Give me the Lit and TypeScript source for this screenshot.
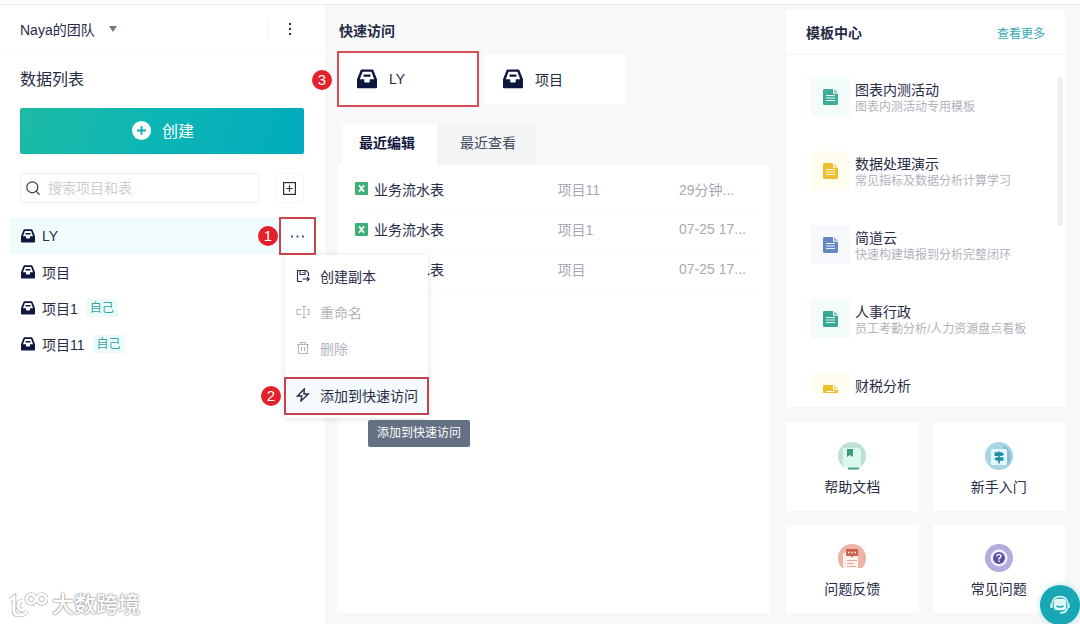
import { LitElement, html, css, svg, nothing } from "lit";
import { customElement, property, state } from "lit/decorators.js";
import { classMap } from "lit/directives/class-map.js";

const base = css`
  * { box-sizing: border-box; }
  button { font: inherit; color: inherit; border: 0; background: none; padding: 0; cursor: pointer; text-align: left; }
  a { color: inherit; text-decoration: none; }
  h2, p, ul { margin: 0; padding: 0; }
  ul { list-style: none; }
  svg { display: block; flex: none; }
`;

const tray = (size: number) => html`<svg width=${size} height=${size} viewBox="0 0 20 20" aria-hidden="true">
  <path fill="#10173f" fill-rule="evenodd" d="M4.800 0.500h10.400a1.400 1.400 0 0 1 1.300 1L20 10.200v7.700a1.300 1.300 0 0 1-1.300 1.300H1.300A1.300 1.300 0 0 1 0 17.900V10.200L3.500 1.500A1.400 1.400 0 0 1 4.800.5ZM5.600 2.800 2.800 10.300h4.400v2.200q0 1 1 1h3.600q1 0 1-1v-2.200h4.400L14.400 2.800ZM6.500 5.600h7v2.200h-7Z"/>
</svg>`;

const doc = (color: string) => html`<svg width="15" height="16" viewBox="0 0 15 16" aria-hidden="true">
  <path fill=${color} d="M1.200 0H10v4.800h5v10a1.200 1.200 0 0 1-1.200 1.200H1.200A1.200 1.200 0 0 1 0 14.800V1.200A1.200 1.200 0 0 1 1.200 0Z"/>
  <path fill=${color} opacity=".75" d="M11.200.3 14.700 3.700h-3.500Z"/>
  <path stroke="#fff" stroke-width="1.100" opacity=".85" d="M3 6.500h9M3 9h9M3 11.500h9"/>
</svg>`;

const sheet = html`<svg width="13" height="13" viewBox="0 0 13 13" aria-hidden="true">
  <rect width="13" height="13" rx="1" fill="#3fae78"/>
  <path d="M4 3.200 9 9.800M9 3.200 4 9.800" stroke="#fff" stroke-width="1.800"/>
</svg>`;

const menuIcons: Record<string, unknown> = {
  copy: svg`<path d="M6 12.500H1.500v-11h8.800L12.500 4v3M4 1.500v4h5v-4M7 3v1M6.500 10H13M11 8l2.200 2L11 12.200"/>`,
  rename: svg`<path d="M5.500 4.500H1v5h4.500M10.500 4.500H13v5h-2.500M6 1.500h1.200q.8 0 .8.800v9.400q0 .8-.8.800H6M10 1.500H8.800q-.8 0-.8.800M10 12.500H8.800q-.8 0-.8-.8"/>`,
  remove: svg`<path d="M1 3.500h12M4.500 3.200V1.500h5v1.700M2.500 3.500v9h9v-9M5.500 6v4M8.500 6v4"/>`,
  flash: svg`<path stroke-width="1.400" d="M8.300 1 1.500 8h4.300L5 13l7.300-7H8Z"/>`,
};

const helpIcons: Record<string, unknown> = {
  book: svg`<circle cx="14" cy="14" r="14" fill="#bfe0d5"/>
    <path d="M5 6h14q4 0 4 4v15H9q-4 0-4-4Z" fill="#dcf8ee"/>
    <path d="M5 21q0 4 4 4h14l-2 2.500H9Q4 26 5 21Z" fill="#eefcf8"/>
    <path d="M10 25.500h12l-2 2H10Z" fill="#44a68a"/>
    <path d="M9 7h6v8l-3-2-3 2Z" fill="#399880"/>`,
  sign: svg`<circle cx="14" cy="14" r="14" fill="#a9d6e6"/>
    <path d="M18 3a13 13 0 0 1 5 20l-4-3Z" fill="#86bfd3"/>
    <rect x="6" y="7" width="16" height="16" rx="1.500" fill="#e2f8fc"/>
    <path d="M13.200 9.500h1.600v12h-1.600Z" fill="#248da6"/>
    <path d="M9.500 10.300h7.500l2.200 1.900-2.200 1.900H9.500ZM18.500 15.200h-7l-2.300 1.800 2.300 1.800h7Z" fill="#248da6"/>`,
  feedback: svg`<circle cx="14" cy="14" r="14" fill="#efb3a4"/>
    <path d="M5 10q2-1 3-4h12v18.500H5Z" fill="#fff0eb"/>
    <path d="M4 24h20l-2 4H6Z" fill="#fff"/>
    <path d="M8 5h12v7h-4.500L14 13.500 12.500 12H8Z" fill="#c9634f"/>
    <path d="M10 8.500h1.500M13.300 8.500h1.500M16.500 8.500H18" stroke="#fff" stroke-width="1.500"/>
    <path d="M9 16.500h10M9 19.500h7M9 22.500h9" stroke="#e3a597" stroke-width="1"/>`,
  question: svg`<circle cx="14" cy="14" r="14" fill="#b5abdc"/><circle cx="14" cy="14" r="8.500" fill="#f4f0ff"/>
    <circle cx="14" cy="14" r="6" fill="#5d50a2"/>
    <path d="M12 12.500q0-2.100 2-2.100t2 1.900q0 1-2 2.300v1M14 16.500v1.500" fill="none" stroke="#fff" stroke-width="1.400"/>`,
};

@customElement("step-mark")
export class StepMark extends LitElement {
  static styles = css`
    :host { display: flex; width: 20px; height: 20px; border-radius: 50%; background: #e3202b; color: #fff; font-size: 15px; line-height: 20px; align-items: center; justify-content: center; }
  `;
  @property() n = "";
  render() { return html`${this.n}`; }
}

@customElement("project-menu")
export class ProjectMenu extends LitElement {
  static styles = [base, css`
    :host { display: block; width: 143px; padding: 4px 0; background: #fff; border-radius: 2px; box-shadow: 0 1px 6px rgba(20, 30, 60, .14); }
    .entry { display: flex; align-items: center; gap: 10px; width: 100%; height: 36px; padding: 0 0 2px 11px; font-size: 14px; white-space: nowrap; color: #272b45; }
    .entry:disabled { color: #b4b6bd; cursor: default; }
    .glyph { fill: none; stroke: currentColor; stroke-width: 1.1; }
    .rule { height: 1px; margin: 5px 0; background: #f6f7f8; }
    .last { position: relative; }
    .hot { background: #f5fbfc; outline: 2px solid #c9434f; outline-offset: -1px; }
    .mark { position: absolute; left: -24px; top: 8px; }
    .tip { position: absolute; left: 83px; top: 42px; padding: 0 9px; border-radius: 2px; background: #647083; color: #fff; font-size: 12px; line-height: 27px; white-space: nowrap; }
  `];
  private item(icon: string, label: string, disabled = false, hot = false) {
    return html`<button class=${classMap({ entry: true, hot })} ?disabled=${disabled}>
      <svg class="glyph" width="14" height="14" viewBox="0 0 14 14" aria-hidden="true">${menuIcons[icon]}</svg>${label}
    </button>`;
  }
  render() {
    return html`
      ${this.item("copy", "创建副本")}
      ${this.item("rename", "重命名", true)}
      ${this.item("remove", "删除", true)}
      <div class="rule"></div>
      <div class="last">
        ${this.item("flash", "添加到快速访问", false, true)}
        <step-mark class="mark" n="2"></step-mark>
        <span class="tip" role="tooltip">添加到快速访问</span>
      </div>`;
  }
}

@customElement("side-panel")
export class SidePanel extends LitElement {
  static styles = [base, css`
    :host { display: flex; flex-direction: column; background: #fff; }
    .team { display: flex; align-items: center; height: 50px; padding: 0 20px 2px; border-bottom: 1px solid #f7f8f9; font-size: 14px; }
    .switch { display: flex; align-items: center; gap: 14px; }
    .more { display: flex; justify-content: center; margin-left: auto; width: 38px; padding: 4px 0; border-left: 1px solid #f1f2f4; }
    .more svg { margin-right: -6px; }
    .title { font-size: 16px; font-weight: 400; line-height: 24px; margin: 13px 20px 16px; }
    .create { display: flex; align-items: center; justify-content: center; gap: 11px; height: 46px; padding: 0 0 2px 2px; margin: 0 21px 0 20px; border-radius: 2px; color: #fff; font-size: 16px; background: linear-gradient(110deg, #1dbba4, #0bb5b6 50%, #00abbd); }
    .tools { display: flex; gap: 17px; margin: 19px 21px 15px 20px; }
    .search { flex: 1; min-width: 0; display: flex; align-items: center; gap: 8px; height: 30px; padding-left: 5px; border: 1px solid #f0f1f3; }
    .search input { flex: 1; min-width: 0; border: 0; outline: 0; padding: 0; background: none; font: inherit; font-size: 14px; }
    .search input::placeholder { color: #cbcdd2; }
    .add { display: flex; align-items: center; justify-content: center; width: 28px; height: 30px; padding-right: 2px; border: 1px solid #f5f6f7; }
    .row { position: relative; display: flex; align-items: center; height: 36px; margin: 0 9px 0 10px; padding-left: 11px; font-size: 14px; }
    .row.active { background: #f2fbfb; }
    .name { display: flex; align-items: center; gap: 7px; }
    .tag { margin-left: 8px; padding: 0 4px; border-radius: 2px; background: #ebfbf9; color: #36a5a8; font-size: 12px; line-height: 18px; }
    .dots { display: flex; align-items: center; justify-content: center; width: 37px; height: 38px; margin: -1px 0 -1px auto; border: 2px solid #c9434f; background: #fafefe; position: relative; z-index: 3; }
    .mark { position: absolute; right: 38px; top: 8px; z-index: 3; }
    .menu { position: absolute; top: 37px; right: -112px; z-index: 2; }
  `];
  private projects = [
    { name: "LY", own: false }, { name: "项目", own: false },
    { name: "项目1", own: true }, { name: "项目11", own: true },
  ];
  render() {
    return html`
      <div class="team">
        <button class="switch">Naya的团队 <svg width="8" height="6" viewBox="0 0 8 6" aria-hidden="true"><path d="M0 0h8L4 6Z" fill="#777a86"/></svg></button>
        <button class="more" aria-label="更多"><svg width="4" height="14" viewBox="0 0 4 14"><path d="M1 1h2v2H1ZM1 6h2v2H1ZM1 11h2v2H1Z" fill="#272b45"/></svg></button>
      </div>
      <h2 class="title">数据列表</h2>
      <button class="create"><svg width="19" height="19" viewBox="0 0 19 19" aria-hidden="true"><circle cx="9.500" cy="9.500" r="9.500" fill="#fff"/><path d="M9.500 5v9M5 9.500h9" stroke="#10b1b4" stroke-width="1.800"/></svg>创建</button>
      <div class="tools">
        <label class="search">
          <svg width="14" height="14" viewBox="0 0 14 14" aria-hidden="true"><circle cx="6.300" cy="6.300" r="5.500" fill="none" stroke="#383c4a" stroke-width="1.200"/><path d="m10.200 10.200 3.300 3.500" stroke="#383c4a" stroke-width="1.200"/></svg>
          <input type="search" aria-label="搜索项目和表" placeholder="搜索项目和表">
        </label>
        <button class="add" aria-label="新建文件夹"><svg width="13" height="13" viewBox="0 0 13 13" fill="none" stroke="#272b35" stroke-width="1.200"><rect x=".6" y=".6" width="11.800" height="11.800"/><path d="M6.500 3.300v6.400M3.300 6.500h6.400"/></svg></button>
      </div>
      <ul>
        ${this.projects.map((p, i) => html`<li class=${classMap({ row: true, active: i === 0 })}>
          <a class="name" href="#">${tray(14)}${p.name}</a>
          ${p.own ? html`<span class="tag">自己</span>` : nothing}
          ${i === 0 ? html`
            <button class="dots" aria-label="项目操作"><svg width="13" height="3" viewBox="0 0 13 3"><path d="M0 .5h2v2H0ZM5.500.5h2v2h-2ZM11 .5h2v2h-2Z" fill="#555b66"/></svg></button>
            <step-mark class="mark" n="1"></step-mark>
            <project-menu class="menu"></project-menu>` : nothing}
        </li>`)}
      </ul>`;
  }
}

@customElement("recent-panel")
export class RecentPanel extends LitElement {
  static styles = [base, css`
    :host { display: flex; flex-direction: column; min-width: 0; padding: 15px 16px 11px 12px; }
    .title { font-size: 14px; line-height: 22px; padding-left: 2px; }
    .quick { display: flex; gap: 6px; margin-top: 9px; align-items: center; }
    .card { position: relative; display: flex; align-items: center; gap: 12px; width: 140px; height: 50px; padding-left: 18px; background: #fff; font-size: 14px; }
    .card.picked { width: 142px; height: 56px; border: 2px solid #d84c58; }
    .mark { position: absolute; left: -27px; top: 17px; z-index: 1; }
    .tabs { display: flex; margin: 17px 0 0 5px; }
    .tab { height: 41px; padding: 0 20px 2px 23px; font-size: 14px; line-height: 37px; color: #43485c; background: #f3f4f6; }
    .tab:first-child { padding: 0 22px 2px 17px; }
    .tab.on { background: #fff; font-weight: 700; color: #10173f; }
    .sheet { flex: 1; padding: 4px 15px 0 13px; background: #fff; }
    table { width: 100%; table-layout: fixed; border-collapse: collapse; font-size: 14px; }
    td { height: 40px; padding: 0 0 0 5px; border-bottom: 1px solid #f8f9fa; color: #a6a9b1; white-space: nowrap; }
    td:first-child { width: 50%; }
    td:nth-child(2) { width: 30%; }
    .file { display: flex; align-items: center; gap: 6px; color: #272b45; }
  `];
  @state() private tab = 0;
  private rows = [["项目11", "29分钟..."], ["项目1", "07-25 17..."], ["项目", "07-25 17..."]];
  render() {
    return html`
      <h2 class="title">快速访问</h2>
      <div class="quick">
        <a class="card picked" href="#">${tray(20)}LY<step-mark class="mark" n="3"></step-mark></a>
        <a class="card" href="#">${tray(20)}项目</a>
      </div>
      <div class="tabs" role="tablist">
        ${["最近编辑", "最近查看"].map((t, i) => html`<button role="tab" aria-selected=${this.tab === i} class=${classMap({ tab: true, on: this.tab === i })} @click=${() => (this.tab = i)}>${t}</button>`)}
      </div>
      <div class="sheet">
        <table><tbody>
          ${this.rows.map(([project, time]) => html`<tr><td><a class="file" href="#">${sheet}业务流水表</a></td><td>${project}</td><td>${time}</td></tr>`)}
        </tbody></table>
      </div>`;
  }
}

@customElement("template-panel")
export class TemplatePanel extends LitElement {
  static styles = [base, css`
    :host { display: flex; flex-direction: column; gap: 15px; padding: 5px 15px 11px 0; }
    .center { background: #fff; padding-bottom: 14px; }
    .head { display: flex; align-items: center; justify-content: space-between; height: 45px; padding: 0 20px; border-bottom: 1px solid #f2f4f5; }
    .head h2 { font-size: 14px; }
    .head a { font-size: 12px; color: #36a9b5; }
    .list { position: relative; height: 316px; margin: 22px 0 0; padding-left: 25px; overflow: hidden; }
    .item { display: flex; gap: 5px; height: 74px; }
    .tile { display: flex; align-items: center; justify-content: center; width: 39px; height: 39px; }
    .mint { background: #f4fcfb; }
    .sun { background: #fffdf0; }
    .sky { background: #f6f8fc; }
    .name { font-size: 14px; line-height: 20px; padding-top: 3px; }
    .desc { font-size: 12px; line-height: 14px; color: #b0b3bb; white-space: nowrap; }
    .thumb { position: absolute; right: 2px; top: 0; width: 5px; height: 149px; border-radius: 3px; background: #eceeef; }
    .help { flex: 1; display: grid; grid-template-columns: 1fr 1fr; grid-auto-rows: 1fr; gap: 14px; }
    .card { display: flex; flex-direction: column; align-items: center; justify-content: center; gap: 6px; padding-top: 7px; background: #fff; font-size: 14px; line-height: 22px; }
  `];
  private items = [
    ["图表内测活动", "图表内测活动专用模板", "mint", "#3fae98"],
    ["数据处理演示", "常见指标及数据分析计算学习", "sun", "#ecc02e"],
    ["简道云", "快速构建填报到分析完整闭环", "sky", "#6487c4"],
    ["人事行政", "员工考勤分析/人力资源盘点看板", "mint", "#3aa893"],
    ["财税分析", "", "sun", "#ecc02e"],
  ];
  private helps = [["book", "帮助文档"], ["sign", "新手入门"], ["feedback", "问题反馈"], ["question", "常见问题"]];
  render() {
    return html`
      <section class="center">
        <div class="head"><h2>模板中心</h2><a href="#">查看更多</a></div>
        <div class="list">
          ${this.items.map(([name, desc, tone, color]) => html`<a class="item" href="#">
            <span class="tile ${tone}">${doc(color)}</span>
            <div><p class="name">${name}</p><p class="desc">${desc}</p></div>
          </a>`)}
          <div class="thumb"></div>
        </div>
      </section>
      <nav class="help">
        ${this.helps.map(([icon, label]) => html`<a class="card" href="#"><svg width="28" height="28" viewBox="0 0 28 28" aria-hidden="true">${helpIcons[icon]}</svg>${label}</a>`)}
      </nav>`;
  }
}

@customElement("app-root")
export class AppRoot extends LitElement {
  static styles = [base, css`
    :host { display: flex; flex-direction: column; min-height: 100vh; position: relative; overflow: hidden; box-sizing: border-box; border-top: 4px solid #fff; background: #f6f8f9; color: #272b45; font-family: "Liberation Sans", "Noto Sans CJK SC", sans-serif; font-size: 14px; }
    .layout { flex: 1; display: grid; grid-template-columns: 325px minmax(0, 1fr) 294px; border-top: 1px solid #e9ebed; }
    .chat { position: absolute; right: 0; bottom: -1px; display: flex; align-items: center; justify-content: center; width: 40px; height: 40px; border-radius: 50%; background: #18a7b5; z-index: 2; box-shadow: 0 0 6px rgba(24, 167, 181, .3); }
    .brand { position: absolute; left: 8px; bottom: 4px; z-index: 2; display: flex; align-items: center; gap: 4px; color: #fff; font-size: 22px; font-weight: 500; line-height: 30px; text-shadow: 0 0 2px #9b9b9b, 0 0 2px #9b9b9b, 0 0 1px #aaa; }
  `];
  render() {
    const mark = "M2 9 6 6v14q0 4 4 4h2q5 0 7-4M15 10q-5 0-5 4.500T15 19M26 4.500a4.500 4.500 0 1 0 0 7l5-7a4.500 4.500 0 1 1 0 7l-5-7";
    return html`
      <div class="layout">
        <side-panel></side-panel>
        <recent-panel></recent-panel>
        <template-panel></template-panel>
      </div>
      <div class="brand">
        <svg width="40" height="28" viewBox="0 0 40 28" fill="none" aria-hidden="true"><path d=${mark} stroke="#bdbdbd" stroke-width="4.500"/><path d=${mark} stroke="#fff" stroke-width="2.800"/></svg>大数跨境
      </div>
      <button class="chat" aria-label="在线客服"><svg width="22" height="20" viewBox="0 0 22 20" fill="none" stroke="#e5fbfc">
        <path d="M3 9Q3.500 1.500 11 1.500T19 9" stroke-width="1.300"/><rect x="4.800" y="3.800" width="12.400" height="11.400" rx="3.500" fill="#dff8fa" stroke="none"/><path d="M2.500 8.500v4.500M19.500 8.500v4.500" stroke-width="2.200"/><path d="M7.500 11q3.500 2 7 0" stroke="#18a7b5" stroke-width="1.500"/><path d="M18.500 13q-1 5-7.500 5" stroke-width="1.500"/></svg></button>`;
  }
}
